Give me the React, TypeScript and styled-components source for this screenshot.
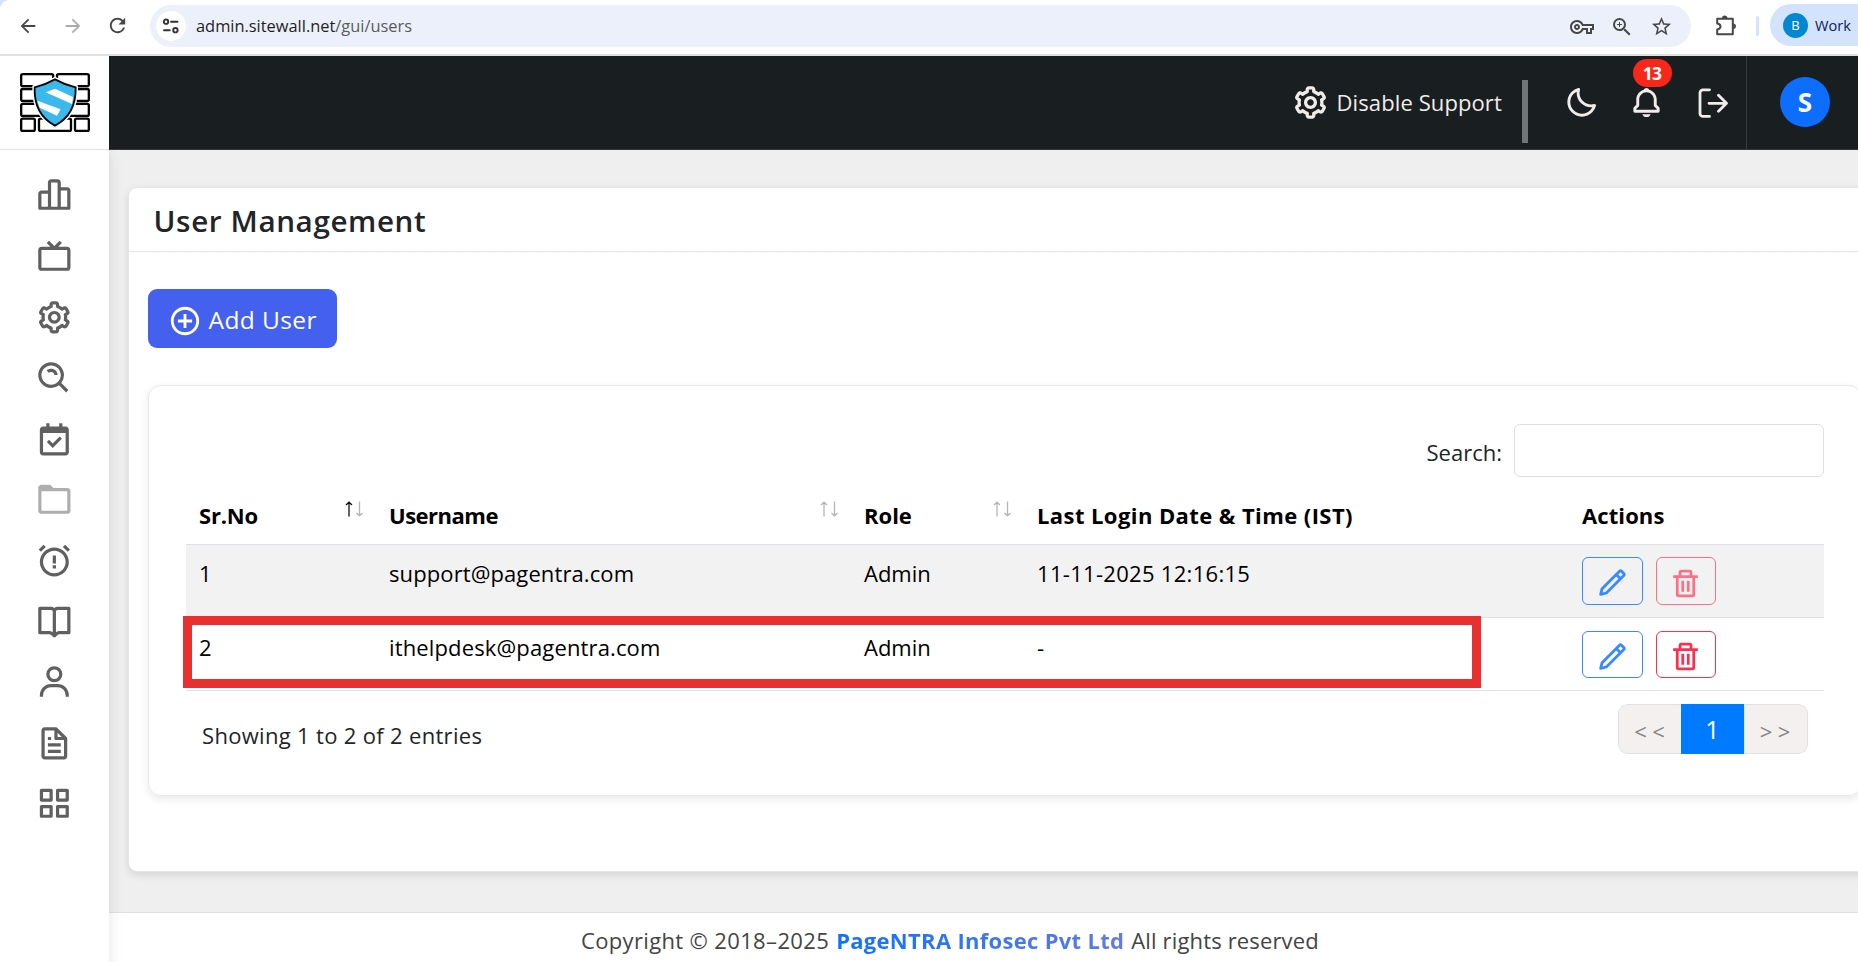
import React from "react";
import styled, { createGlobalStyle, css } from "styled-components";
import {
  BiAlarmExclamation, BiBarChartAlt2, BiBell, BiBookOpen, BiCalendarCheck, BiCog, BiFile, BiFolder,
  BiGridAlt, BiMoon, BiPencil, BiPlusCircle, BiSearchAlt, BiTrash, BiTv, BiUser,
} from "react-icons/bi";
import { MdArrowBack, MdArrowForward, MdOutlineVpnKey, MdRefresh, MdStarBorder, MdZoomIn } from "react-icons/md";

const GlobalStyle = createGlobalStyle`
  * { box-sizing: border-box; }
  body { margin: 0; overflow: hidden; font-family: "Open Sans", "Noto Sans", sans-serif; font-size: 22px; color: #212529; }
  svg { display: block; flex: none; }
`;

/* text run with its own letter spacing */
const Text = styled.span<{ $track?: number }>`
  white-space: nowrap;
  letter-spacing: ${(p) => p.$track ?? 0}px;
`;

const Window = styled.div`
  width: 1858px;
  height: 962px;
  display: flex;
  flex-direction: column;
  overflow: hidden;
`;

/* ---------- browser bar ---------- */
const BrowserCorner = styled.div`
  background: #d3e3fd;
  flex: none;
`;
const BrowserBar = styled.div`
  height: 56px;
  display: flex;
  align-items: flex-start;
  overflow: hidden;
  background: #fff;
  border-bottom: 2px solid #dfe2e2;
  border-top-left-radius: 9px;
  & > * { flex: none; }
`;
const NavIcons = styled.div`
  width: 150px;
  height: 51px;
  display: flex;
  align-items: center;
  padding-left: 17px;
  gap: 22.5px;
  color: #474747;
`;
const NavIcon = styled.span<{ $muted?: boolean }>`
  opacity: ${(p) => (p.$muted ? 0.45 : 1)};
`;
const AddressBar = styled.div`
  margin-top: 5px;
  width: 1541px;
  height: 42px;
  border-radius: 21px;
  background: #ecf0fa;
  display: flex;
  align-items: center;
  padding: 0 18px 0 6px;
`;
const SiteInfo = styled.div`
  width: 30px;
  height: 30px;
  border-radius: 50%;
  background: #fff;
  display: grid;
  place-items: center;
  margin-right: 10px;
`;
const Url = styled.div`
  flex: 1;
  font-size: 16.4px;
  line-height: 44px;
  color: #1f1f1f;
`;
const UrlPath = styled.span`
  color: #5a5c60;
`;
const AddressIcons = styled.div`
  display: flex;
  align-items: center;
  gap: 16px;
  padding-top: 1px;
  color: #474747;
`;
const Extensions = styled.div`
  margin: 14px 0 0 24px;
`;
const BarDivider = styled.div`
  width: 3px;
  height: 20px;
  margin: 16px 11px 0 19px;
  border-radius: 2px;
  background: #d3e3fd;
`;
const Profile = styled.div`
  margin-top: 4px;
  width: 130px;
  height: 42px;
  border-radius: 21px;
  background: #d3e3fd;
  display: flex;
  align-items: center;
  padding-left: 13px;
  gap: 7px;
  font-size: 14.6px;
  color: #0b2252;
`;
const ProfileDot = styled.span`
  width: 25px;
  height: 25px;
  border-radius: 50%;
  background: #0288d1;
  color: #fff;
  font-size: 13px;
  line-height: 25px;
  text-align: center;
`;

/* ---------- app shell ---------- */
const Shell = styled.div`
  flex: 1;
  min-height: 0;
  display: grid;
  grid-template-columns: 109px 1fr;
`;
const Sidebar = styled.nav`
  position: relative;
  z-index: 1;
  background: #fff;
  box-shadow: 0 94px 14px rgba(0, 0, 0, 0.1);
  color: #606060;
`;
const LogoBox = styled.div`
  height: 94px;
  border-bottom: 1px solid #e2e2e2;
  padding: 17px 0 0 20px;
`;
const SideItem = styled.div<{ $faded?: boolean }>`
  height: 60.8px;
  display: grid;
  place-items: center;
  opacity: ${(p) => (p.$faded ? 0.5 : 1)};
`;
const SideList = styled.div`
  padding-top: 15.4px;
`;
const Page = styled.div`
  min-width: 0;
  height: 906px;
  display: flex;
  flex-direction: column;
  overflow: hidden;
  background: #efefef;
`;
const TopBar = styled.header`
  height: 94px;
  flex: none;
  position: relative;
  z-index: 2;
  display: flex;
  justify-content: flex-end;
  background: #191e20;
  border-bottom: 1px solid #34383a;
  color: #f1ecea;
`;
const Support = styled.div`
  display: flex;
  align-items: center;
  height: 92px;
  gap: 7px;
`;
const SupportBar = styled.div`
  width: 5.6px;
  height: 63px;
  margin: 24px 36px 0 20.5px;
  background: #717576;
`;
const TopIcons = styled.div`
  display: flex;
  align-items: center;
  height: 93px;
  padding-right: 18px;
`;
const TopIcon = styled.div<{ $w: number }>`
  position: relative;
  width: ${(p) => p.$w}px;
`;
const Badge = styled.span`
  position: absolute;
  left: 3.5px;
  top: -26px;
  width: 39px;
  height: 28px;
  border-radius: 14px;
  background: #f7281a;
  color: #fff;
  font-size: 17.5px;
  font-weight: 700;
  line-height: 29px;
  letter-spacing: -0.8px;
  text-align: center;
`;
const Account = styled.div`
  width: 112px;
  height: 93px;
  border-left: 1px solid #363b3d;
  padding: 21px 0 0 33px;
`;
const Avatar = styled.div`
  width: 50px;
  height: 50px;
  border-radius: 50%;
  background: #0d6efd;
  color: #fff;
  font-size: 26px;
  font-weight: 700;
  line-height: 51px;
  text-align: center;
`;

/* ---------- page content ---------- */
const Content = styled.main`
  flex: 1;
  padding: 37px 0 0 19px;
`;
const Card = styled.section`
  width: 1753px;
  height: 685px;
  background: #fff;
  border: 1px solid #e5e6ea;
  border-radius: 9px;
  box-shadow: 0 3px 9px rgba(0, 0, 0, 0.11);
`;
const CardTitle = styled.h1`
  margin: 0;
  height: 64px;
  padding-left: 24.5px;
  border-bottom: 1px solid #e3e5e8;
  font-size: 29.6px;
  font-weight: 600;
  line-height: 66px;
`;
const CardBody = styled.div`
  padding: 37px 18px 0 19px;
`;
const AddButton = styled.button`
  width: 189px;
  height: 59px;
  display: flex;
  align-items: center;
  gap: 7px;
  padding: 2px 0 0 19.5px;
  border: 0;
  border-radius: 9px;
  background: #4361ee;
  color: #fff;
  font: 400 24.5px "Open Sans", sans-serif;
  svg { margin-top: 3px; }
`;
const Panel = styled.div`
  margin-top: 37px;
  height: 411px;
  padding: 38px 37px 0;
  border: 1px solid #e5e7ea;
  border-radius: 13px;
  box-shadow: 0 3px 8px rgba(0, 0, 0, 0.09);
`;
const SearchRow = styled.label`
  height: 53px;
  display: flex;
  justify-content: flex-end;
  gap: 12px;
  line-height: 57px;
`;
const SearchInput = styled.input`
  width: 310px;
  height: 53px;
  border: 1px solid #dcdfe2;
  border-radius: 6px;
  background: #fff;
`;

const columns = css`
  display: grid;
  grid-template-columns: 190px 475px 173px 545px 255px;
`;
const HeadRow = styled.div`
  ${columns}
  margin-top: 9px;
  height: 59px;
  border-bottom: 1px solid #dee2e6;
  color: #000;
  font-weight: 700;
  line-height: 58px;
`;
const HeadCell = styled.div`
  display: flex;
  justify-content: space-between;
  padding: 0 13px;
`;
const SortMark = styled.span`
  margin: 15px 0 0;
`;
const Row = styled.div<{ $striped?: boolean }>`
  ${columns}
  position: relative;
  height: 73px;
  border-bottom: 1px solid #dee0e4;
  background: ${(p) => (p.$striped ? "#f2f2f2" : "#fff")};
  color: #000;
  padding-top: ${(p) => (p.$striped ? 12 : 13)}px;
  line-height: 33px;
`;
const Cell = styled.div`
  padding-left: 13px;
`;
const ActionCell = styled.div`
  display: flex;
  gap: 13px;
  padding-left: 13px;
`;
const ActionButton = styled.button<{ $tone: "blue" | "red"; $tall?: boolean; $disabled?: boolean }>`
  width: ${(p) => (p.$tone === "blue" ? 61 : 60)}px;
  height: ${(p) => (p.$tall ? 48 : 47)}px;
  display: grid;
  place-items: center;
  padding: 4px 1px 0 0;
  border: 1px solid currentColor;
  border-radius: 6px;
  background: transparent;
  color: ${(p) => (p.$tone === "blue" ? "#3b8afd" : "#fb2f4e")};
  opacity: ${(p) => (p.$disabled ? 0.65 : 1)};
`;
const Highlight = styled.div`
  position: absolute;
  left: -3px;
  top: -2px;
  width: 1298px;
  height: 72px;
  border: 9px solid #e83030;
`;
const TableFoot = styled.div`
  display: flex;
  justify-content: space-between;
  padding: 13px 16px 0 16px;
`;
const Summary = styled.div`
  line-height: 63px;
`;
const Pager = styled.div`
  display: flex;
  width: 190px;
  height: 50px;
  border-radius: 9px;
  overflow: hidden;
`;
const PageButton = styled.div<{ $active?: boolean; $side?: "left" | "right" }>`
  flex: 1;
  text-align: center;
  font-size: ${(p) => (p.$active ? 25 : 22)}px;
  line-height: ${(p) => (p.$active ? 51 : 53)}px;
  letter-spacing: ${(p) => (p.$active ? 0 : 5.4)}px;
  text-indent: ${(p) => (p.$active ? 0 : 4)}px;
  background: ${(p) => (p.$active ? "#007bff" : "#f4f0f0")};
  color: ${(p) => (p.$active ? "#fff" : "#858585")};
  border: ${(p) => (p.$active ? "0" : "1px solid #dee2e6")};
  ${(p) => p.$side === "left" && "border-right: 0; border-radius: 9px 0 0 9px;"}
  ${(p) => p.$side === "right" && "border-radius: 0 9px 9px 0;"}
`;
const Footer = styled.footer`
  height: 50px;
  flex: none;
  display: flex;
  gap: 7px;
  padding-left: 472px;
  border-top: 1px solid #dfdfdf;
  background: #fff;
  color: #444;
  line-height: 55px;
`;
const Company = styled(Text)`
  font-weight: 700;
  background: linear-gradient(90deg, #0d72ff, #627ae6);
  background-clip: text;
  -webkit-background-clip: text;
  color: transparent;
`;

function TuneIcon() {
  return (
    <svg width="18" height="16" viewBox="0 0 18 16" fill="none" stroke="#333" strokeWidth="1.9">
      <circle cx="4" cy="3.7" r="2.2" />
      <path d="M9 3.7h6.5M2 12.2h5.8" strokeLinecap="round" />
      <circle cx="13.4" cy="12.2" r="2.2" />
    </svg>
  );
}

function PuzzleIcon() {
  return (
    <svg width="22" height="23" viewBox="0 0 22 23">
      <path d="M2.2 4.8h15.6v15.4H2.2v-4.8c2.2-.4 3.3-1.6 3.3-3s-1.1-2.6-3.3-3z" fill="none" stroke="#474747" strokeWidth="2" strokeLinejoin="round" />
      <path d="M7 4.3a2.7 2.7 0 0 1 5.4 0zM18.2 9.6a2.7 2.7 0 0 1 0 5.4z" fill="#474747" />
    </svg>
  );
}

function LogoutIcon() {
  return (
    <svg width="30" height="30" viewBox="0 0 30 30" fill="none" stroke="currentColor" strokeWidth="2.8" strokeLinecap="round" strokeLinejoin="round">
      <path d="M11.5 1.8H5A3 3 0 0 0 2 4.8V25.4a3 3 0 0 0 3 3h6.5" />
      <path d="M11 15.3H28M20.5 7.3l8 8-8 8" />
    </svg>
  );
}

function WallLogo() {
  return (
    <svg width="70" height="59" viewBox="60 219 210 177">
      <g fill="#fff" stroke="#050505" strokeWidth="7">
        <rect x="63.5" y="222.5" width="96" height="36" rx="5" />
        <rect x="171" y="222.5" width="95.5" height="36" rx="5" />
        <rect x="63.5" y="267" width="70" height="36" rx="5" />
        <rect x="200" y="267" width="66.5" height="36" rx="5" />
        <rect x="63.5" y="311.5" width="70" height="36" rx="5" />
        <rect x="200" y="311.5" width="66.5" height="36" rx="5" />
        <rect x="63.5" y="356" width="41" height="36.5" rx="5" />
        <rect x="117" y="356" width="96" height="36.5" rx="5" />
        <rect x="225" y="356" width="41.5" height="36.5" rx="5" />
      </g>
      <path d="M165 238Q136 254 104 262Q101 344 165 377Q229 344 227 262Q194 254 165 238Z" fill="#fff" stroke="#fff" strokeWidth="14" />
      <path d="M165 238Q136 254 104 262Q101 344 165 377Q229 344 227 262Q194 254 165 238Z" fill="#3cb9ec" stroke="#050505" strokeWidth="5.5" />
      <path d="M137 277L165 266L219 291L216 312ZM112 302L182 328L171 347L119 323Z" fill="#fff" />
    </svg>
  );
}

function SortArrows({ ascending }: { ascending?: boolean }) {
  return (
    <svg width="18" height="16" viewBox="0 0 18 16" fill="none" strokeWidth="1.3">
      <path d="M4 15.5V1.5M1 4L4 1.2L7 4" stroke={ascending ? "#111" : "#b5b5b5"} />
      <path d="M14.5 .5V14.5M11.5 12L14.5 14.8L17.5 12" stroke="#b5b5b5" />
    </svg>
  );
}

const sideIcons = [
  BiBarChartAlt2, BiTv, BiCog, BiSearchAlt, BiCalendarCheck, BiFolder,
  BiAlarmExclamation, BiBookOpen, BiUser, BiFile, BiGridAlt,
];

const headings = [
  { label: "Sr.No", track: -0.2, sort: "asc" },
  { label: "Username", track: -0.5, sort: "none" },
  { label: "Role", track: 0, sort: "none" },
  { label: "Last Login Date & Time (IST)", track: 0.42 },
  { label: "Actions", track: 0.1 },
];

const users = [
  { id: 1, name: "support@pagentra.com", track: 0.1, role: "Admin", login: "11-11-2025 12:16:15", locked: true },
  { id: 2, name: "ithelpdesk@pagentra.com", track: 0.14, role: "Admin", login: "-", locked: false },
];

export default function App() {
  return (
    <Window>
      <GlobalStyle />
      <BrowserCorner>
        <BrowserBar>
          <NavIcons>
            <NavIcon><MdArrowBack size={22} /></NavIcon>
            <NavIcon $muted><MdArrowForward size={22} /></NavIcon>
            <NavIcon><MdRefresh size={23} /></NavIcon>
          </NavIcons>
          <AddressBar>
            <SiteInfo><TuneIcon /></SiteInfo>
            <Url>admin.sitewall.net<UrlPath>/gui/users</UrlPath></Url>
            <AddressIcons>
              <MdOutlineVpnKey size={24} />
              <MdZoomIn size={24} />
              <MdStarBorder size={23} />
            </AddressIcons>
          </AddressBar>
          <Extensions><PuzzleIcon /></Extensions>
          <BarDivider />
          <Profile><ProfileDot>B</ProfileDot>Work</Profile>
        </BrowserBar>
      </BrowserCorner>

      <Shell>
        <Sidebar>
          <LogoBox><WallLogo /></LogoBox>
          <SideList>
            {sideIcons.map((Icon, i) => (
              <SideItem key={i} $faded={Icon === BiFolder}><Icon size={38.7} /></SideItem>
            ))}
          </SideList>
        </Sidebar>

        <Page>
          <TopBar>
            <Support>
              <BiCog size={39} />
              <Text $track={0.1}>Disable Support</Text>
            </Support>
            <SupportBar />
            <TopIcons>
              <TopIcon $w={65}><BiMoon size={35} /></TopIcon>
              <TopIcon $w={69}>
                <BiBell size={35} />
                <Badge>13</Badge>
              </TopIcon>
              <TopIcon $w={30}><LogoutIcon /></TopIcon>
            </TopIcons>
            <Account><Avatar>S</Avatar></Account>
          </TopBar>

          <Content>
            <Card>
              <CardTitle><Text $track={0.62}>User Management</Text></CardTitle>
              <CardBody>
                <AddButton><BiPlusCircle size={34} /><Text $track={0.4}>Add User</Text></AddButton>
                <Panel>
                  <SearchRow>
                    <Text>Search:</Text>
                    <SearchInput />
                  </SearchRow>
                  <HeadRow>
                    {headings.map((h) => (
                      <HeadCell key={h.label}>
                        <Text $track={h.track}>{h.label}</Text>
                        {h.sort && <SortMark><SortArrows ascending={h.sort === "asc"} /></SortMark>}
                      </HeadCell>
                    ))}
                  </HeadRow>
                  {users.map((u) => (
                    <Row key={u.id} $striped={u.locked}>
                      <Cell>{u.id}</Cell>
                      <Cell><Text $track={u.track}>{u.name}</Text></Cell>
                      <Cell><Text>{u.role}</Text></Cell>
                      <Cell><Text $track={0.3}>{u.login}</Text></Cell>
                      <ActionCell>
                        <ActionButton $tone="blue" $tall={u.locked}><BiPencil size={34} /></ActionButton>
                        <ActionButton $tone="red" $tall={u.locked} $disabled={u.locked}><BiTrash size={33} /></ActionButton>
                      </ActionCell>
                      {!u.locked && <Highlight />}
                    </Row>
                  ))}
                  <TableFoot>
                    <Summary><Text $track={0.32}>Showing 1 to 2 of 2 entries</Text></Summary>
                    <Pager>
                      <PageButton $side="left">&lt;&lt;</PageButton>
                      <PageButton $active>1</PageButton>
                      <PageButton $side="right">&gt;&gt;</PageButton>
                    </Pager>
                  </TableFoot>
                </Panel>
              </CardBody>
            </Card>
          </Content>

          <Footer>
            <Text $track={0.35}>Copyright © 2018–2025</Text>
            <Company $track={0.3}>PageNTRA Infosec Pvt Ltd</Company>
            <Text $track={0.15}>All rights reserved</Text>
          </Footer>
        </Page>
      </Shell>
    </Window>
  );
}
